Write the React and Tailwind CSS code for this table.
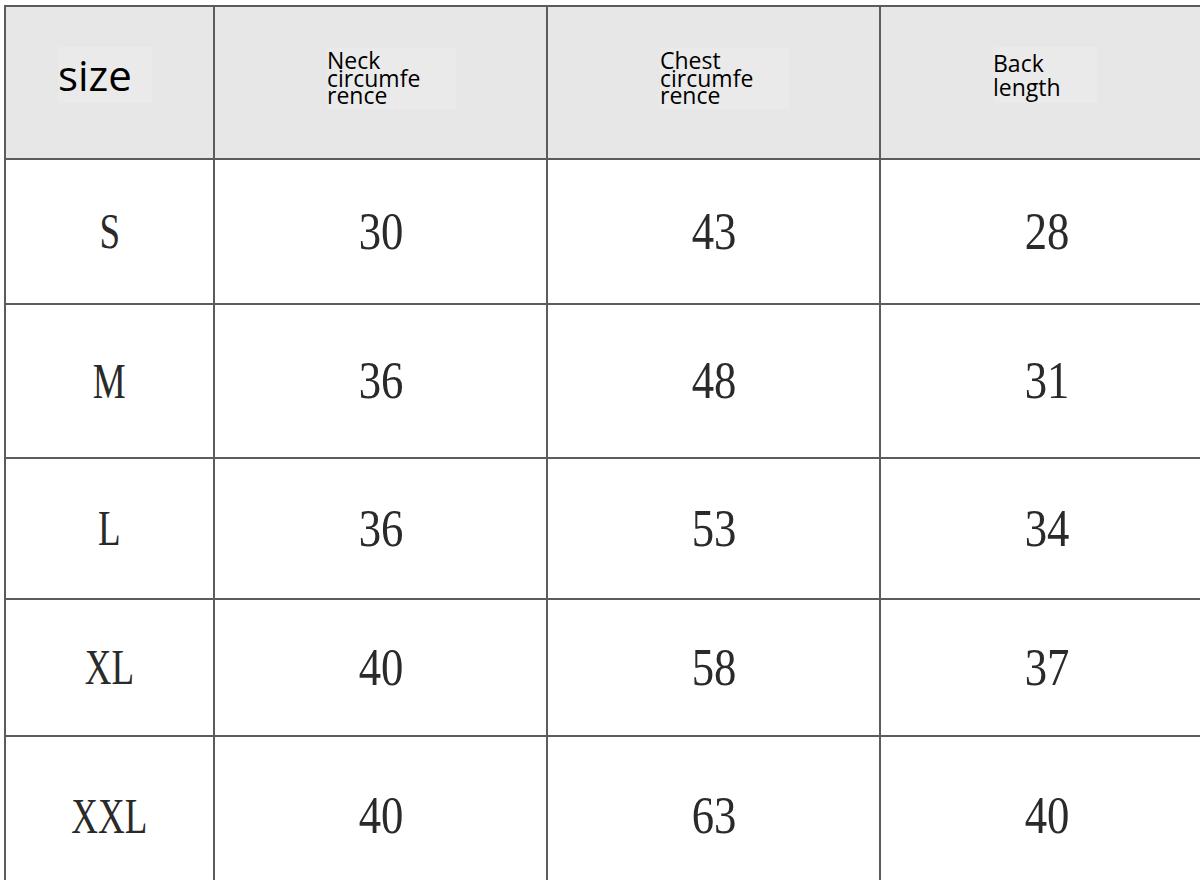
const headers = [
  { lines: ["size"], big: true },
  { lines: ["Neck", "circumfe", "rence"], leading: "leading-[17.5px] -mt-2" },
  { lines: ["Chest", "circumfe", "rence"], leading: "leading-[17.5px] -mt-2" },
  { lines: ["Back", "length"], leading: "leading-[24px] -mt-4" },
];

const rows = [
  { size: "S", values: ["30", "43", "28"], h: "h-[145px]" },
  { size: "M", values: ["36", "48", "31"], h: "h-[154px]" },
  { size: "L", values: ["36", "53", "34"], h: "h-[141px]" },
  { size: "XL", values: ["40", "58", "37"], h: "h-[137px]" },
  { size: "XXL", values: ["40", "63", "40"], h: "h-[160px]" },
];

const sans = { fontFamily: '"Open Sans", "Noto Sans", sans-serif' };
const serif = { fontFamily: '"Liberation Serif", "DejaVu Serif", serif' };

export default function App() {
  return (
    <div className="w-[1200px] h-[880px] overflow-hidden bg-white">
      <div className="mt-[5px] ml-[4px] w-[1220px] border-l-2 border-t-2 border-[#5c5c5c]">
        {/* header */}
        <div className="flex h-[153px]">
          {headers.map((h, i) => (
            <div
              key={i}
              className={
                "h-full bg-[#e7e7e7] border-r-2 border-b-2 border-[#5c5c5c] flex items-center " +
                (i === 0 ? "w-[209px] pl-[52px]" : "w-[333px] pl-[112px]")
              }
            >
              {h.big ? (
                <div className="bg-[#eaeaea] pr-5 py-1 -mt-4 text-[42px] leading-[48px] text-black" style={sans}>
                  size
                </div>
              ) : (
                <div
                  className={"bg-[#eaeaea] pr-9 py-1 text-[23px] text-black " + h.leading}
                  style={sans}
                >
                  {h.lines.map((l) => (
                    <div key={l}>{l}</div>
                  ))}
                </div>
              )}
            </div>
          ))}
        </div>

        {/* body rows */}
        {rows.map((r) => (
          <div key={r.size} className={"flex " + r.h}>
            <div className="w-[209px] h-full border-r-2 border-b-2 border-[#5c5c5c] flex items-center justify-center">
              <span className="text-[50px] text-[#2a2a2a] scale-x-[0.74] inline-block" style={serif}>
                {r.size}
              </span>
            </div>
            {r.values.map((v, j) => (
              <div
                key={j}
                className="w-[333px] h-full border-r-2 border-b-2 border-[#5c5c5c] flex items-center justify-center"
              >
                <span className="text-[52px] text-[#2a2a2a] scale-x-[0.86] inline-block" style={serif}>
                  {v}
                </span>
              </div>
            ))}
          </div>
        ))}
      </div>
    </div>
  );
}
